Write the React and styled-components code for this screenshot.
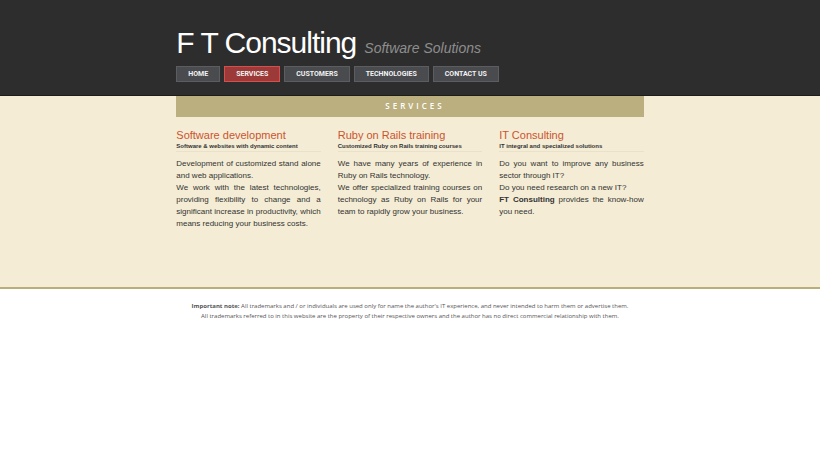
import React from "react";
import styled, { createGlobalStyle } from "styled-components";

const GlobalStyle = createGlobalStyle`
  body {
    margin: 0;
    background: #fff;
    color: #333;
    font-family: "Liberation Sans", Arial, sans-serif;
    font-size: 8px;
    line-height: 12px;
  }
`;

const Container = styled.div`
  width: 57%;
  margin: 0 auto;
`;

const Header = styled.header`
  background: #2d2d2d;
  border-bottom: 1px solid #1c1c1c;
  padding: 25px 0 13px;
`;

const Brand = styled.div`
  display: flex;
  align-items: baseline;
  gap: 8px;
  white-space: nowrap;
`;

const Title = styled.h1`
  margin: 0;
  color: #fff;
  font-size: 30px;
  font-weight: 400;
  line-height: 35px;
  letter-spacing: -1px;
`;

const Tagline = styled.span`
  color: #8d8d8d;
  font-size: 14px;
  font-style: italic;
`;

const Nav = styled.nav`
  display: flex;
  gap: 4px;
  margin-top: 6px;
`;

const NavLink = styled.a`
  padding: 1px 11px;
  border: 1px solid ${(p) => (p.$active ? "#d5504c" : "#5b5d60")};
  background: ${(p) => (p.$active ? "#9b3a38" : "#494b4f")};
  color: #f2f2f2;
  font-family: Roboto, sans-serif;
  font-size: 7px;
  font-weight: 700;
  line-height: 12px;
  text-decoration: none;
  white-space: nowrap;
`;

const Main = styled.main`
  background: #f4ecd4;
  border-bottom: 2px solid #b9ad7c;
  padding-bottom: 57px;
`;

const Banner = styled.h2`
  margin: 0;
  padding: 4px 0 5px 10px;
  background: #bbaf80;
  color: #fff;
  font-family: "Open Sans", sans-serif;
  font-size: 8px;
  font-weight: 600;
  line-height: 12px;
  letter-spacing: 3px;
  text-align: center;
`;

const Columns = styled.div`
  display: grid;
  grid-template-columns: repeat(3, 1fr);
  gap: 17px;
  padding-top: 12px;
`;

const ColumnHeading = styled.h3`
  margin: 0;
  color: #cb5430;
  font-size: 11px;
  font-weight: 400;
  line-height: 13px;
`;

const ColumnNote = styled.h4`
  margin: 0 0 6px;
  border-bottom: 1px solid #e9e1ca;
  color: #333;
  font-size: 6px;
  line-height: 9px;
`;

const Paragraph = styled.p`
  margin: 0;
  text-align: justify;
`;

const Footer = styled.footer`
  padding: 12px 0;
  color: #555;
  font-family: "Open Sans", sans-serif;
  font-size: 6px;
  line-height: 10px;
  text-align: center;
`;

const FooterLine = styled.p`
  margin: 0;
`;

const links = ["HOME", "SERVICES", "CUSTOMERS", "TECHNOLOGIES", "CONTACT US"];

const services = [
  {
    title: "Software development",
    note: "Software & websites with dynamic content",
    text: [
      "Development of customized stand alone and web applications.",
      "We work with the latest technologies, providing flexibility to change and a significant increase in productivity, which means reducing your business costs.",
    ],
  },
  {
    title: "Ruby on Rails training",
    note: "Customized Ruby on Rails training courses",
    text: [
      "We have many years of experience in Ruby on Rails technology.",
      "We offer specialized training courses on technology as Ruby on Rails for your team to rapidly grow your business.",
    ],
  },
  {
    title: "IT Consulting",
    note: "IT integral and specialized solutions",
    text: [
      "Do you want to improve any business sector through IT?",
      "Do you need research on a new IT?",
      <>
        <strong>FT Consulting</strong> provides the know-how you need.
      </>,
    ],
  },
];

export default function App() {
  return (
    <>
      <GlobalStyle />
      <Header>
        <Container>
          <Brand>
            <Title>F T Consulting</Title>
            <Tagline>Software Solutions</Tagline>
          </Brand>
          <Nav>
            {links.map((label) => (
              <NavLink key={label} href="#" $active={label === "SERVICES"}>
                {label}
              </NavLink>
            ))}
          </Nav>
        </Container>
      </Header>
      <Main>
        <Container>
          <Banner>SERVICES</Banner>
          <Columns>
            {services.map((service) => (
              <section key={service.title}>
                <ColumnHeading>{service.title}</ColumnHeading>
                <ColumnNote>{service.note}</ColumnNote>
                {service.text.map((text, i) => (
                  <Paragraph key={i}>{text}</Paragraph>
                ))}
              </section>
            ))}
          </Columns>
        </Container>
      </Main>
      <Footer>
        <Container>
          <FooterLine>
            <strong>Important note:</strong> All trademarks and / or individuals are used only for name the author's IT experience, and never intended to harm them or advertise them.
          </FooterLine>
          <FooterLine>
            All trademarks referred to in this website are the property of their respective owners and the author has no direct commercial relationship with them.
          </FooterLine>
        </Container>
      </Footer>
    </>
  );
}
